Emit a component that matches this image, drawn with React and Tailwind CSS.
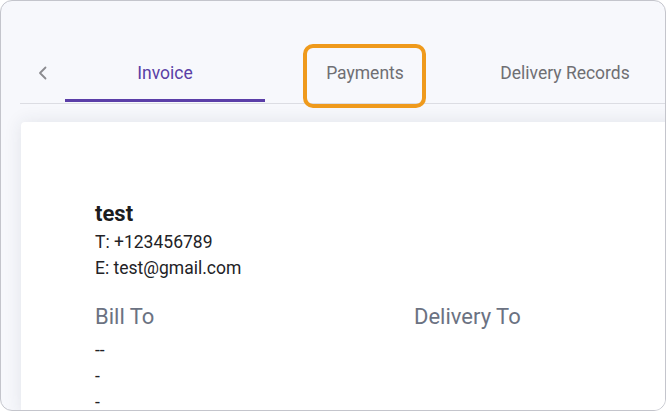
import React from "react";

export default function App() {
  return (
    <div
      className="relative w-[666px] h-[411px] overflow-hidden rounded-[12px] border border-[#c4c5cc] bg-[#f7f8fc]"
      style={{ fontFamily: "Roboto, 'Liberation Sans', sans-serif" }}
    >
      <div className="flex flex-col h-full pt-[46px] pl-[19px]">
        <div className="flex border-b border-[#dcdde3]">
          <div className="w-[45px] h-[52px] flex items-center justify-center">
            <svg width="12" height="14" viewBox="0 0 12 14" fill="none">
              <path d="M8.5 1.5 L3 7 L8.5 12.5" stroke="#8b8b8f" strokeWidth="1.8" strokeLinecap="round" strokeLinejoin="round" />
            </svg>
          </div>
          <div className="w-[200px] flex flex-col mb-[1px]">
            <div className="h-[52px] pt-[1px] flex items-center justify-center text-[17.5px] text-[#5a3fa6]">Invoice</div>
            <div className="h-[3px] bg-[#5b3ea8]" />
          </div>
          <div className="w-[200px] flex flex-col mb-[1px]">
            <div className="h-[52px] pt-[1px] flex items-center justify-center text-[17.5px] text-[#6f6f73]">Payments</div>
            <div className="h-[3px]" />
          </div>
          <div className="w-[200px] flex flex-col mb-[1px]">
            <div className="h-[52px] pt-[1px] flex items-center justify-center text-[17.5px] text-[#6f6f73]">Delivery Records</div>
            <div className="h-[3px]" />
          </div>
        </div>
        <div className="mt-[18px] ml-[1px] w-[700px] flex-1 bg-white rounded-tl-[4px] shadow-[0_0_18px_rgba(40,45,70,0.10)] pt-[77px] pl-[74px]">
          <div className="text-[22px] leading-[30px] font-bold text-[#1c1c1e]">test</div>
          <div className="text-[17.5px] leading-[26px] text-[#222226]">T: +123456789</div>
          <div className="text-[17.5px] leading-[26px] text-[#222226]">E: test@gmail.com</div>
          <div className="mt-[22px] grid grid-cols-[319px_1fr]">
            <div>
              <div className="text-[22px] leading-[28px] text-[#6b7282]">Bill To</div>
              <div className="mt-[6px] text-[17.5px] leading-[26px] text-[#222226]">
                <div>--</div>
                <div>-</div>
                <div>-</div>
              </div>
            </div>
            <div>
              <div className="text-[22px] leading-[28px] text-[#6b7282]">Delivery To</div>
            </div>
          </div>
        </div>
      </div>
      <div className="absolute left-[302px] top-[43px] w-[123px] h-[64px] rounded-[10px] border-[4px] border-[#ef9a1c]" />
    </div>
  );
}
